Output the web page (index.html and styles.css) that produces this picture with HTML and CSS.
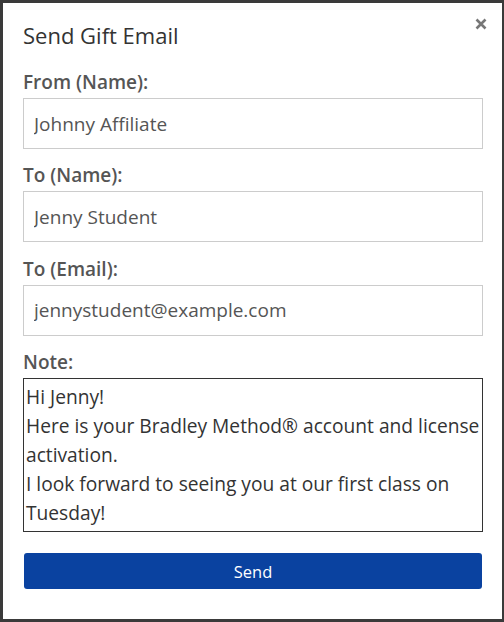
FILE: index.html
```html
<!DOCTYPE html>
<html>
<head>
<meta charset="utf-8">
<link rel="stylesheet" href="styles.css">
</head>
<body>
<div class="modal">
  <div class="modal-header">
    <h1 class="title">Send Gift Email</h1>
    <button class="close" aria-label="Close">
      <svg width="12" height="12" viewBox="0 0 12 12"><path d="M1.5 1.5 L10.5 10.5 M10.5 1.5 L1.5 10.5" stroke="#777" stroke-width="2.6" stroke-linecap="butt"/></svg>
    </button>
  </div>
  <form class="form">
    <label class="label first">From (Name):</label>
    <input class="input" type="text" value="Johnny Affiliate">
    <label class="label">To (Name):</label>
    <input class="input" type="text" value="Jenny Student">
    <label class="label">To (Email):</label>
    <input class="input" type="text" value="jennystudent@example.com">
    <label class="label">Note:</label>
    <textarea class="note">Hi Jenny!
Here is your Bradley Method® account and license activation.
I look forward to seeing you at our first class on Tuesday!</textarea>
    <button type="button" class="send">Send</button>
  </form>
</div>
</body>
</html>
```
FILE: styles.css
```css
html, body {
  margin: 0;
  padding: 0;
  background: #3a3a3a;
  height: 622px;
  overflow: hidden;
}
body {
  padding-top: 3px;
  font-family: "Open Sans", "Liberation Sans", sans-serif;
}
.modal {
  box-sizing: border-box;
  width: 499px;
  height: 616px;
  margin-left: 3px;
  background: #fff;
  padding: 17px 19px 0 20px;
  display: flex;
  flex-direction: column;
}
.modal-header {
  display: flex;
  justify-content: space-between;
  align-items: flex-start;
}
.title {
  margin: 0;
  font-size: 22px;
  font-weight: 400;
  line-height: 30px;
  color: #333;
}
.close {
  border: 0;
  background: none;
  padding: 0;
  margin: -2px -4px 0 0;
  width: 12px;
  height: 12px;
  display: flex;
}
.form {
  display: flex;
  flex-direction: column;
}
.label {
  font-size: 19px;
  font-weight: 600;
  line-height: 24px;
  color: #555;
  margin: 14.45px 0 4px;
}
.label.first {
  margin-top: 20px;
}
.input {
  box-sizing: border-box;
  height: 51px;
  width: 460px;
  border: 1px solid #ccc;
  padding: 0 10px;
  font-family: "Open Sans", "Liberation Sans", sans-serif;
  font-size: 19px;
  color: #555;
  outline: none;
  margin: 0;
}
.note {
  box-sizing: border-box;
  width: 460px;
  height: 154px;
  border: 1px solid #333;
  padding: 4px 0 0 2px;
  margin: 0;
  font-family: "Open Sans", "Liberation Sans", sans-serif;
  font-size: 19.2px;
  line-height: 28.8px;
  color: #333;
  resize: none;
  overflow: hidden;
  outline: none;
}
.send {
  margin: 21px 0 0 1px;
  width: 458px;
  height: 36px;
  border: 0;
  border-radius: 3px;
  background: #0a42a0;
  color: #fff;
  font-family: "Open Sans", "Liberation Sans", sans-serif;
  font-size: 16.5px;
  padding: 0;
}
```
